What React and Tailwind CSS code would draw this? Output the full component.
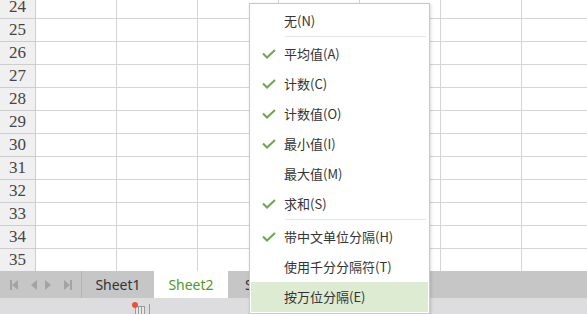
import React from "react";

const rows = [24, 25, 26, 27, 28, 29, 30, 31, 32, 33, 34, 35];
const cols = [0, 1, 2, 3, 4, 5, 6];

const items = [
  { label: "无(N)", checked: false },
  "sep",
  { label: "平均值(A)", checked: true },
  { label: "计数(C)", checked: true },
  { label: "计数值(O)", checked: true },
  { label: "最小值(I)", checked: true },
  { label: "最大值(M)", checked: false },
  { label: "求和(S)", checked: true },
  "sep",
  { label: "带中文单位分隔(H)", checked: true },
  { label: "使用千分分隔符(T)", checked: false },
  { label: "按万位分隔(E)", checked: false, active: true },
];

function Check() {
  return (
    <svg width="14" height="10" viewBox="0 0 14 10" fill="none">
      <polyline points="1,4.5 5,8.5 13,1" stroke="#6ba84c" strokeWidth="2" />
    </svg>
  );
}

function Tri({ dir }) {
  const p = dir === "l" ? "6,0 6,10 0,5" : "0,0 0,10 6,5";
  return (
    <svg width="6" height="10" viewBox="0 0 6 10">
      <polygon points={p} fill="#a3a3a3" />
    </svg>
  );
}

export default function App() {
  return (
    <div
      className="relative w-[587px] h-[314px] overflow-hidden bg-white"
      style={{ fontFamily: '"Noto Sans", "Noto Sans CJK SC", sans-serif' }}
    >
      <div className="h-[271px] overflow-hidden">
        <div className="mt-[-4px] flex flex-col">
          {rows.map((r) => (
            <div key={r} className="flex h-[23px] shrink-0">
              <div
                className="w-[36px] shrink-0 bg-[#f0f0f0] border-r border-b border-[#cdcdcd] flex items-center justify-center text-[17px] text-[#444]"
                style={{ fontFamily: '"Liberation Serif", serif' }}
              >
                {r}
              </div>
              {cols.map((c) => (
                <div
                  key={c}
                  className="w-[81px] shrink-0 border-r border-b border-[#d4d4d4]"
                />
              ))}
            </div>
          ))}
        </div>
      </div>

      <div className="flex h-[27px] bg-[#c6c6c6]">
        <div className="w-[82px] shrink-0 flex items-center border-r border-[#b4b4b4]">
          <div className="ml-[10px] flex items-center">
            <div className="w-[2px] h-[10px] bg-[#a3a3a3]" />
            <Tri dir="l" />
          </div>
          <div className="ml-[13px]">
            <Tri dir="l" />
          </div>
          <div className="ml-[8px]">
            <Tri dir="r" />
          </div>
          <div className="ml-[13px] flex items-center">
            <Tri dir="r" />
            <div className="w-[2px] h-[10px] bg-[#a3a3a3]" />
          </div>
        </div>
        <div className="w-[72px] shrink-0 flex items-center justify-center text-[14px] text-[#333]">
          Sheet1
        </div>
        <div className="w-[74px] shrink-0 flex items-center justify-center bg-white text-[14px] text-[#4f9a24]">
          Sheet2
        </div>
        <div className="pl-[17px] flex items-center text-[14px] text-[#333]">Sheet3</div>
      </div>

      <div className="h-[16px] bg-[#dddddf] flex items-start">
        <div className="relative ml-[135px] mt-[8px] w-[10px] h-[8px] border border-[#9a9a9a] border-b-0 bg-[#e8e8e8] flex">
          <div className="w-[3px] border-r border-[#9a9a9a]" />
          <div className="w-[3px] border-r border-[#9a9a9a]" />
          <div className="absolute left-[-4px] top-[-5px] w-[6px] h-[6px] rounded-full bg-[#e8523a]" />
        </div>
        <div className="ml-[4px] mt-[6px] w-px h-[10px] bg-[#9a9a9a]" />
      </div>

      <div
        className="absolute left-[249px] top-[3px] w-[181px] bg-white border border-[#c8c8c8] pt-[2px] pb-[1px] shadow-[1px_1px_3px_rgba(0,0,0,0.15)]"
        style={{ fontFamily: '"Noto Sans CJK SC", "Noto Sans", sans-serif' }}
      >
        {items.map((it, i) =>
          it === "sep" ? (
            <div key={i} className="h-[3px]">
              <div className="ml-[35px] mr-[3px] h-px bg-[#e4e4e4]" />
            </div>
          ) : (
            <div
              key={i}
              className={`mx-px h-[30px] flex items-center text-[13px] text-[#333] ${
                it.active ? "bg-[#dcebd2]" : ""
              }`}
            >
              <div className="w-[33px] shrink-0 pl-[11px] flex items-center">
                {it.checked ? <Check /> : null}
              </div>
              <span>{it.label}</span>
            </div>
          )
        )}
      </div>
    </div>
  );
}
